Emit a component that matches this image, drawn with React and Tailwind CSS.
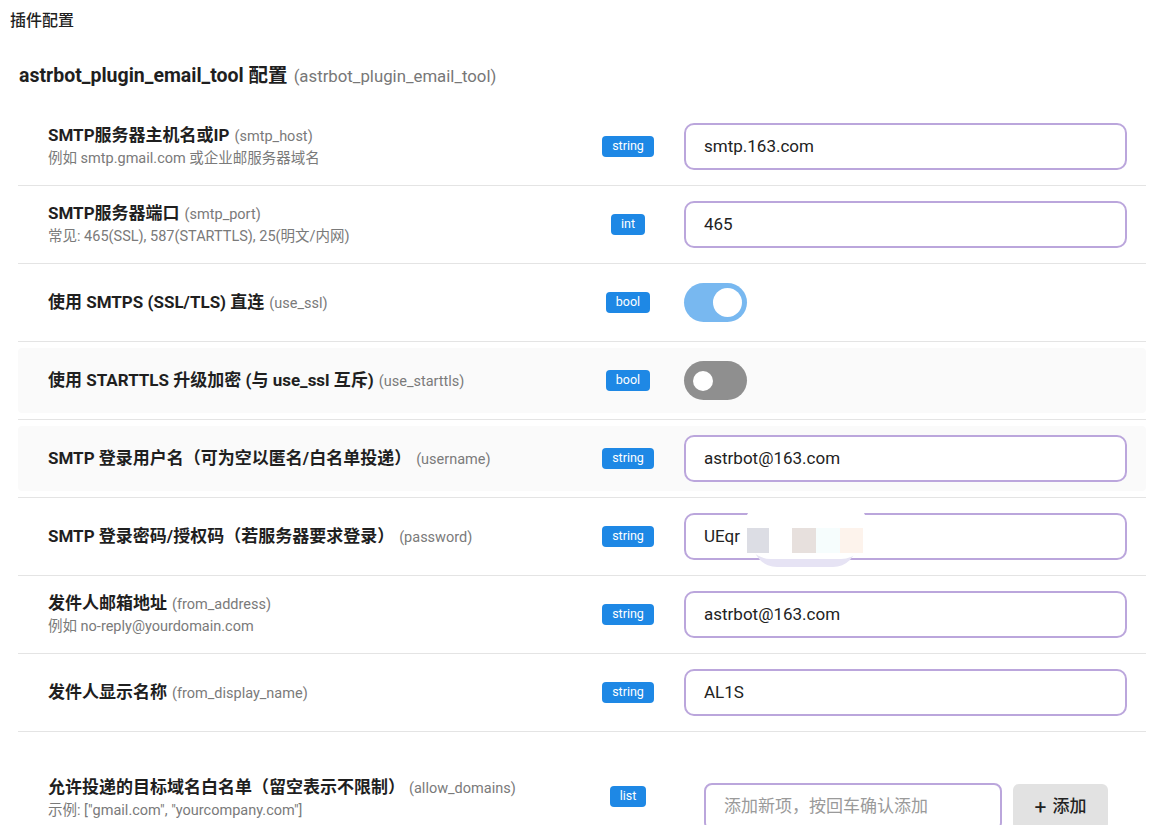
import React from 'react';

const FONT = "font-['Roboto','Noto_Sans_CJK_SC',sans-serif]";

const rows = [
    { title: 'SMTP服务器主机名或IP', key: 'smtp_host', desc: '例如 smtp.gmail.com 或企业邮服务器域名', type: 'string', value: 'smtp.163.com' },
    { title: 'SMTP服务器端口', key: 'smtp_port', desc: '常见: 465(SSL), 587(STARTTLS), 25(明文/内网)', type: 'int', value: '465' },
    { title: '使用 SMTPS (SSL/TLS) 直连', key: 'use_ssl', type: 'bool', on: true },
    { title: '使用 STARTTLS 升级加密 (与 use_ssl 互斥)', key: 'use_starttls', type: 'bool', on: false, shaded: true },
    { title: 'SMTP 登录用户名（可为空以匿名/白名单投递）', key: 'username', type: 'string', value: 'astrbot@163.com', shaded: true, gap: true },
    { title: 'SMTP 登录密码/授权码（若服务器要求登录）', key: 'password', type: 'string', value: 'UEqr', masked: true, gap: true },
    { title: '发件人邮箱地址', key: 'from_address', desc: '例如 no-reply@yourdomain.com', type: 'string', value: 'astrbot@163.com' },
    { title: '发件人显示名称', key: 'from_display_name', type: 'string', value: 'AL1S' },
];

function Badge({ children }) {
    return (
        <span className="inline-flex h-[21px] items-center rounded-[4px] bg-[#1e88e5] px-[10px] text-[12.5px] leading-none text-white">
            {children}
        </span>
    );
}

function Toggle({ on }) {
    if (on) {
        return (
            <div className="flex h-[39px] w-[63px] items-center justify-end rounded-full bg-[#78b8f0] pr-[5px]">
                <div className="h-[29px] w-[29px] rounded-full bg-white" />
            </div>
        );
    }
    return (
        <div className="flex h-[39px] w-[63px] items-center rounded-full bg-[#8f8f8f] pl-[9px]">
            <div className="h-[20px] w-[20px] rounded-full bg-white" />
        </div>
    );
}

function TextBox({ value, masked }) {
    return (
        <div className="relative flex h-[47px] w-[443px] items-center rounded-[10px] border-2 border-[#bba6dc] bg-white px-[18px] text-[17px] text-[#222]">
            {value}
            {masked ? (
                <div className="absolute left-[59px] top-[-16px] h-[70px] w-[122px]">
                    <div className="absolute left-[8px] top-[44px] h-[24px] w-[104px] rounded-b-full bg-[#e6e3f4]" />
                    <div className="absolute left-0 top-0 h-[60px] w-[122px] rounded-[26px] bg-white" />
                    <div className="absolute left-[2px] top-[29px] h-[25px] w-[22px] bg-[#dcdde4]" />
                    <div className="absolute left-[47px] top-[29px] h-[25px] w-[24px] bg-[#e7e0dd]" />
                    <div className="absolute left-[71px] top-[29px] h-[25px] w-[24px] bg-[#f6fdfd]" />
                    <div className="absolute left-[95px] top-[29px] h-[25px] w-[23px] bg-[#fdf3ec]" />
                </div>
            ) : null}
        </div>
    );
}

function ConfigRow({ row }) {
    const content = (
        <div className={`flex h-full items-center pl-[30px] pr-[19px] ${row.shaded ? 'rounded-[4px] bg-[#fafafa]' : ''}`}>
            <div className="flex-1">
                <div className="text-[17px] leading-[22px]">
                    <span className="font-bold text-[#1f1f1f]">{row.title}</span>
                    <span className={`text-[14.5px] text-[#7a7a7a] ${row.gap ? 'ml-[5px]' : 'ml-[5px]'}`}>({row.key})</span>
                </div>
                {row.desc ? <div className="mt-[1px] text-[14.5px] leading-[20px] text-[#7a7a7a]">{row.desc}</div> : null}
            </div>
            <div className="flex w-[90px] justify-center">
                <Badge>{row.type}</Badge>
            </div>
            <div className="ml-[11px] w-[443px]">
                {row.type === 'bool' ? <Toggle on={row.on} /> : <TextBox value={row.value} masked={row.masked} />}
            </div>
        </div>
    );

    return (
        <div className={`h-[78px] border-b border-[#e4e4e4] ${row.shaded ? 'py-[6px]' : ''}`}>
            {content}
        </div>
    );
}

export default function App() {
    return (
        <div className={`min-h-screen overflow-hidden bg-white text-[#1f1f1f] ${FONT}`}>
            <div className="pl-[10px] pt-[10px] text-[16px] font-medium leading-[22px]">插件配置</div>

            <div className="mt-[31px] pl-[19px] leading-[26px]">
                <span className="text-[19.5px] font-bold">astrbot_plugin_email_tool 配置</span>
                <span className="ml-[6px] text-[16.8px] text-[#777]">(astrbot_plugin_email_tool)</span>
            </div>

            <div className="ml-[18px] mt-[18px] w-[1128px]">
                {rows.map((row) => (
                    <ConfigRow key={row.key} row={row} />
                ))}

                <div className="flex items-start pl-[30px] pr-[19px] pt-[44px]">
                    <div className="flex-1">
                        <div className="text-[17px] leading-[22px]">
                            <span className="font-bold">允许投递的目标域名白名单（留空表示不限制）</span>
                            <span className="ml-[4px] text-[14.5px] text-[#7a7a7a]">(allow_domains)</span>
                        </div>
                        <div className="mt-[1px] text-[14.5px] leading-[20px] text-[#7a7a7a]">示例: ["gmail.com", "yourcompany.com"]</div>
                    </div>
                    <div className="flex w-[90px] justify-center pt-[10px]">
                        <Badge>list</Badge>
                    </div>
                    <div className="ml-[11px] flex w-[443px] gap-[11px] pl-[20px] pt-[7px]">
                        <div className="flex h-[48px] w-[298px] items-center rounded-[8px] border-2 border-[#bba6dc] px-[18px] text-[17px] text-[#9a9a9a]">
                            添加新项，按回车确认添加
                        </div>
                        <button className="mt-[1px] flex h-[46px] w-[95px] items-center justify-center gap-[6px] rounded-[6px] bg-[#e2e2e2] text-[17px] font-medium text-[#222]">
                            <span className="text-[21px] font-normal leading-none">+</span>
                            <span>添加</span>
                        </button>
                    </div>
                </div>
            </div>
        </div>
    );
}
